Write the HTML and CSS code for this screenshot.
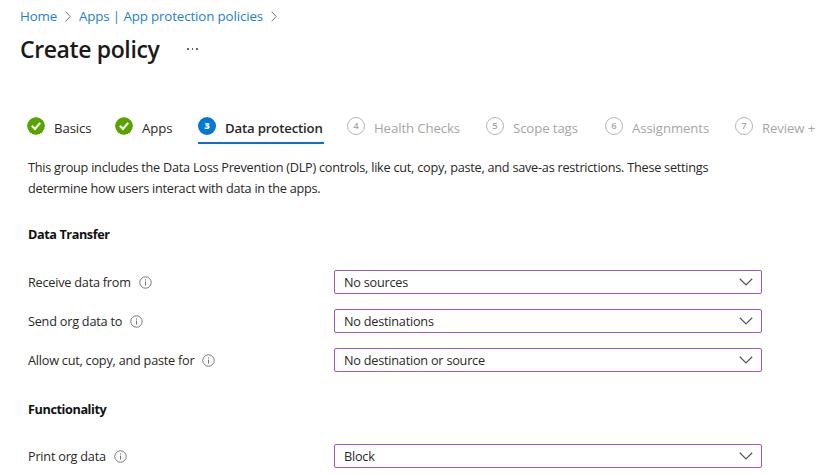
FILE: index.html
```html
<!DOCTYPE html>
<html lang="en">
<head>
<meta charset="utf-8">
<title>Create policy</title>
<link rel="stylesheet" href="styles.css">
</head>
<body>
<svg class="defs" width="0" height="0" aria-hidden="true">
  <symbol id="check" viewBox="0 0 18 18"><circle cx="9" cy="9" r="9" fill="#57a300"/><path d="M4.8 8.8 8 12l5.2-6.2" fill="none" stroke="#fff" stroke-width="2.1"/></symbol>
  <symbol id="info" viewBox="0 0 13 13"><circle cx="6.5" cy="6.5" r="5.7" fill="none" stroke="#777" stroke-width="1"/><path d="M6.5 5.6v4M6.5 3.4v1.2" stroke="#777" stroke-width="1"/></symbol>
  <symbol id="down" viewBox="0 0 14 8"><path d="M.8.8 7 6.9 13.2.8" fill="none" stroke="#555" stroke-width="1.2"/></symbol>
  <symbol id="right" viewBox="0 0 6 11"><path d="M.7.7 5.2 5.5.7 10.3" fill="none" stroke="#777" stroke-width="1"/></symbol>
</svg>
<nav class="crumbs">
  <a class="crumb-home">Home</a><svg class="sep"><use href="#right"/></svg>
  <a class="crumb-apps">Apps | App protection policies</a><svg class="sep"><use href="#right"/></svg>
</nav>
<header class="head"><h1>Create policy</h1><span class="more"><i></i><i></i><i></i></span></header>
<div class="tabs">
  <div class="tab"><svg class="badge"><use href="#check"/></svg><span>Basics</span></div>
  <div class="tab"><svg class="badge"><use href="#check"/></svg><span>Apps</span></div>
  <div class="tab active"><b class="badge">3</b><span>Data protection</span></div>
  <div class="tab todo"><b class="badge">4</b><span>Health Checks</span></div>
  <div class="tab todo"><b class="badge">5</b><span>Scope tags</span></div>
  <div class="tab todo"><b class="badge">6</b><span>Assignments</span></div>
  <div class="tab todo"><b class="badge">7</b><span>Review +</span></div>
</div>
<main>
  <p class="intro">This group includes the Data Loss Prevention (DLP) controls, like cut, copy, paste, and save-as restrictions. These settings<br>determine how users interact with data in the apps.</p>
  <h2>Data Transfer</h2>
  <div class="fields">
    <div class="row"><label>Receive data from</label><svg class="info"><use href="#info"/></svg><div class="select"><span>No sources</span><svg class="down"><use href="#down"/></svg></div></div>
    <div class="row"><label>Send org data to</label><svg class="info"><use href="#info"/></svg><div class="select"><span>No destinations</span><svg class="down"><use href="#down"/></svg></div></div>
    <div class="row"><label>Allow cut, copy, and paste for</label><svg class="info"><use href="#info"/></svg><div class="select"><span>No destination or source</span><svg class="down"><use href="#down"/></svg></div></div>
  </div>
  <h2 class="second">Functionality</h2>
  <div class="fields">
    <div class="row"><label>Print org data</label><svg class="info"><use href="#info"/></svg><div class="select"><span>Block</span><svg class="down"><use href="#down"/></svg></div></div>
  </div>
</main>
</body>
</html>
```
FILE: styles.css
```css
* { box-sizing: border-box; }
html { overflow: hidden; }
body { margin: 0; width: 817px; height: 475px; overflow: hidden; background: #fff; color: #292827; font: 13px/20px "Open Sans", "Noto Sans", sans-serif; letter-spacing: -0.2px; }
.defs { display: none; }
svg { flex: none; }
.crumbs { display: flex; align-items: center; height: 20px; margin: 6px 0 0 20px; color: #1b7fd6; white-space: nowrap; font-size: 13.3px; letter-spacing: -0.12px; }
.crumb-home { width: 45px; }
.crumb-apps { width: 192px; margin-left: 8px; }
.sep { width: 6px; height: 11px; }
.head { display: flex; align-items: center; height: 32px; margin: 7px 0 0 20px; }
h1 { margin: 0; width: 167px; font-size: 23px; line-height: 32px; font-weight: 600; letter-spacing: -0.38px; color: #1b1a19; white-space: nowrap; }
.more { display: flex; gap: 3px; }
.more i { width: 1.5px; height: 1.5px; background: #666; }
.tabs { display: grid; grid-template-columns: 88px 83px 149px 139px 119px 130px 90px; margin: 51px 0 0 27px; height: 28px; }
.tab { display: flex; align-items: flex-start; gap: 9px; height: 28px; line-height: 22px; white-space: nowrap; font-size: 13.2px; letter-spacing: -0.1px; }
.badge { flex: none; width: 18px; height: 18px; margin-top: 1px; border-radius: 50%; font-size: 9.5px; line-height: 16px; text-align: center; letter-spacing: 0; }
.active { width: 126px; border-bottom: 2px solid #0f6fd0; font-weight: 600; letter-spacing: -0.17px; }
.active .badge { background: #0078d4; color: #fff; line-height: 18px; }
.todo { color: #a8a6a4; }
.todo .badge { border: 1px solid #b8b6b4; font-weight: 600; }
.tab span { padding-top: 1px; }
main { padding-left: 28px; font-size: 12.7px; letter-spacing: -0.23px; }
.intro { margin: 13px 0 0; line-height: 20.5px; letter-spacing: -0.245px; white-space: nowrap; }
h2 { margin: 26px 0 0; font-size: 12.7px; line-height: 20px; font-weight: 700; letter-spacing: -0.42px; color: #111; }
.second { margin-top: 27px; }
.fields { display: grid; gap: 15px; margin-top: 26px; width: 734px; }
.second + .fields { margin-top: 25px; }
.row { display: flex; align-items: center; height: 24px; }
.info { width: 13px; height: 13px; margin-left: 8px; }
.select { display: flex; align-items: center; justify-content: space-between; width: 428px; height: 24px; margin-left: auto; padding: 0 8px 0 9px; border: 1px solid #a055b8; border-radius: 2px; }
.down { width: 14px; height: 8px; }
```
